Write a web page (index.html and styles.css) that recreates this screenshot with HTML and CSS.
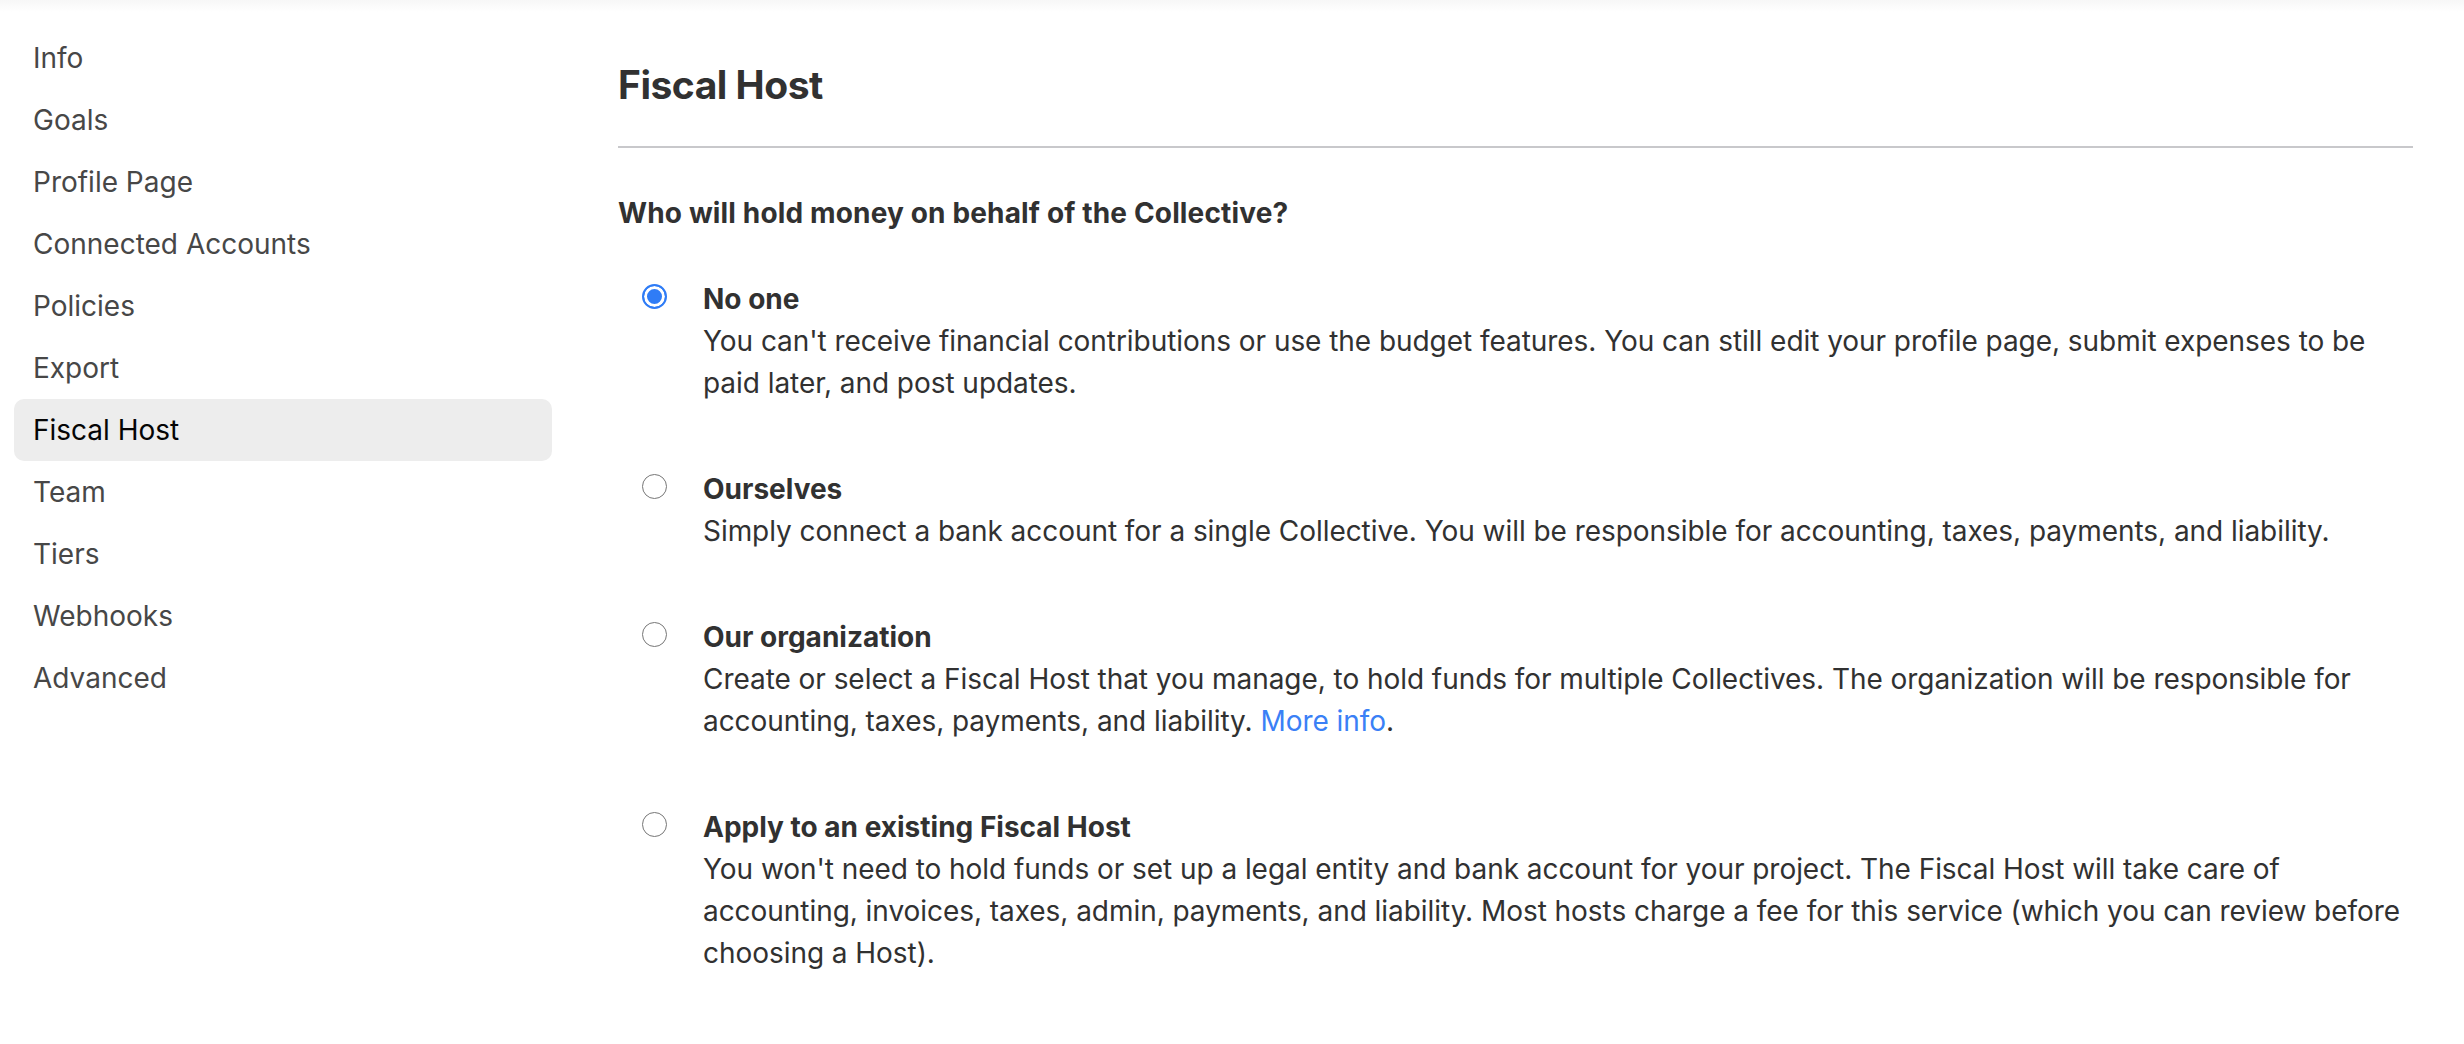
FILE: index.html
```html
<!DOCTYPE html>
<html lang="en">
<head>
<meta charset="utf-8">
<title>Fiscal Host</title>
<link rel="stylesheet" href="styles.css">
</head>
<body>
<div class="topshade"></div>
<div class="page">
  <nav class="sidebar">
    <a class="nav-item">Info</a>
    <a class="nav-item">Goals</a>
    <a class="nav-item">Profile Page</a>
    <a class="nav-item">Connected Accounts</a>
    <a class="nav-item">Policies</a>
    <a class="nav-item">Export</a>
    <a class="nav-item active">Fiscal Host</a>
    <a class="nav-item">Team</a>
    <a class="nav-item">Tiers</a>
    <a class="nav-item">Webhooks</a>
    <a class="nav-item">Advanced</a>
  </nav>
  <main class="main">
    <h1 class="title">Fiscal Host</h1>
    <hr class="divider">
    <h2 class="question">Who will hold money on behalf of the Collective?</h2>
    <div class="options">
      <label class="option">
        <span class="radio checked"></span>
        <span class="option-text">
          <span class="option-title">No one</span>
          <span class="option-desc">You can't receive financial contributions or use the budget features. You can still edit your profile page, submit expenses to be paid later, and post updates.</span>
        </span>
      </label>
      <label class="option">
        <span class="radio"></span>
        <span class="option-text">
          <span class="option-title">Ourselves</span>
          <span class="option-desc">Simply connect a bank account for a single Collective. You will be responsible for accounting, taxes, payments, and liability.</span>
        </span>
      </label>
      <label class="option">
        <span class="radio"></span>
        <span class="option-text">
          <span class="option-title">Our organization</span>
          <span class="option-desc">Create or select a Fiscal Host that you manage, to hold funds for multiple Collectives. The organization will be responsible for accounting, taxes, payments, and liability. <a class="link">More info</a>.</span>
        </span>
      </label>
      <label class="option">
        <span class="radio"></span>
        <span class="option-text">
          <span class="option-title">Apply to an existing Fiscal Host</span>
          <span class="option-desc">You won't need to hold funds or set up a legal entity and bank account for your project. The Fiscal Host will take care of accounting, invoices, taxes, admin, payments, and liability. Most hosts charge a fee for this service (which you can review before choosing a Host).</span>
        </span>
      </label>
    </div>
  </main>
</div>
</body>
</html>
```

FILE: styles.css
```css
* { box-sizing: border-box; }
html, body {
  margin: 0;
  padding: 0;
  background: #ffffff;
}
body {
  font-family: Inter, "Noto Sans", "Liberation Sans", sans-serif;
  color: #313131;
  position: relative;
}
.topshade {
  position: absolute;
  left: 0;
  right: 0;
  top: 0;
  height: 12px;
  background: linear-gradient(#f7f7f7, rgba(255,255,255,0));
}
.page {
  display: flex;
  padding: 27px 51px 0 14px;
}
.sidebar {
  flex: none;
  width: 538px;
  margin-right: 66px;
  display: flex;
  flex-direction: column;
}
.nav-item {
  display: block;
  height: 62px;
  line-height: 62px;
  padding-left: 19px;
  font-size: 28px;
  color: #474747;
  border-radius: 10px;
  cursor: pointer;
}
.nav-item.active {
  background: #ededed;
  color: #050505;
}
.main {
  flex: 1;
  min-width: 0;
}
.title {
  margin: 34px 0 0;
  font-size: 39px;
  line-height: 48px;
  font-weight: 700;
  letter-spacing: -0.5px;
  color: #313131;
}
.divider {
  margin: 37px 0 0;
  border: 0;
  height: 2px;
  background: #c8c8cb;
}
.question {
  margin: 44px 0 0;
  font-size: 28px;
  line-height: 42px;
  font-weight: 700;
  letter-spacing: 0.15px;
  color: #313131;
}
.options {
  margin-top: 44px;
  display: flex;
  flex-direction: column;
  gap: 64px;
}
.option {
  display: flex;
  align-items: flex-start;
  padding-left: 24px;
  gap: 36px;
  cursor: pointer;
}
.radio {
  flex: none;
  width: 25px;
  height: 25px;
  margin-top: 6px;
  border-radius: 50%;
  border: 1.5px solid #767676;
  background: #fff;
}
.radio.checked {
  border: 2.5px solid #2f7cf6;
  background: #2f7cf6;
  box-shadow: inset 0 0 0 3px #fff;
}
.option-text {
  display: flex;
  flex-direction: column;
  font-size: 28px;
  line-height: 42px;
}
.option-title {
  font-weight: 700;
  letter-spacing: 0;
  color: #313131;
}
.option-desc {
  color: #313131;
  letter-spacing: -0.05px;
}
.link {
  color: #3a80f6;
  cursor: pointer;
}
```
